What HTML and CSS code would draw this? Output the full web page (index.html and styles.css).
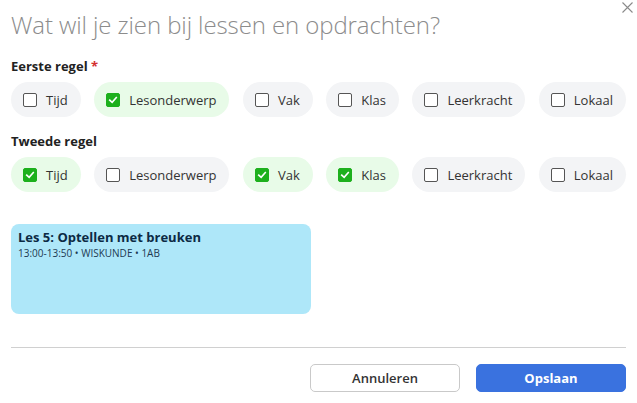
FILE: index.html
```html
<!DOCTYPE html>
<html lang="nl">
<head>
<meta charset="utf-8">
<link rel="stylesheet" href="styles.css">
</head>
<body>
<div class="dialog">
  <button class="close" aria-label="Sluiten">
    <svg width="11" height="11" viewBox="0 0 11 11"><path d="M0.5 0.5L10.5 10.5M10.5 0.5L0.5 10.5" stroke="#8a8a8a" stroke-width="1.1" fill="none"/></svg>
  </button>
  <h1 class="title">Wat wil je zien bij lessen en opdrachten?</h1>

  <div class="section">
    <div class="label">Eerste regel <span class="req">*</span></div>
    <div class="chips">
      <label class="chip"><span class="box"></span>Tijd</label>
      <label class="chip on"><span class="box"><svg viewBox="0 0 14 14"><path d="M3.2 7.2L6 9.8L10.8 4.3" stroke="#fff" stroke-width="1.9" fill="none" stroke-linecap="square"/></svg></span>Lesonderwerp</label>
      <label class="chip"><span class="box"></span>Vak</label>
      <label class="chip"><span class="box"></span>Klas</label>
      <label class="chip"><span class="box"></span>Leerkracht</label>
      <label class="chip"><span class="box"></span>Lokaal</label>
    </div>
  </div>

  <div class="section">
    <div class="label">Tweede regel</div>
    <div class="chips">
      <label class="chip on"><span class="box"><svg viewBox="0 0 14 14"><path d="M3.2 7.2L6 9.8L10.8 4.3" stroke="#fff" stroke-width="1.9" fill="none" stroke-linecap="square"/></svg></span>Tijd</label>
      <label class="chip"><span class="box"></span>Lesonderwerp</label>
      <label class="chip on"><span class="box"><svg viewBox="0 0 14 14"><path d="M3.2 7.2L6 9.8L10.8 4.3" stroke="#fff" stroke-width="1.9" fill="none" stroke-linecap="square"/></svg></span>Vak</label>
      <label class="chip on"><span class="box"><svg viewBox="0 0 14 14"><path d="M3.2 7.2L6 9.8L10.8 4.3" stroke="#fff" stroke-width="1.9" fill="none" stroke-linecap="square"/></svg></span>Klas</label>
      <label class="chip"><span class="box"></span>Leerkracht</label>
      <label class="chip"><span class="box"></span>Lokaal</label>
    </div>
  </div>

  <div class="preview">
    <div class="preview-title">Les 5: Optellen met breuken</div>
    <div class="preview-sub">13:00-13:50 • WISKUNDE • 1AB</div>
  </div>

  <div class="divider"></div>

  <div class="actions">
    <button class="btn secondary">Annuleren</button>
    <button class="btn primary">Opslaan</button>
  </div>
</div>
</body>
</html>
```
FILE: styles.css
```css
* { box-sizing: border-box; }
html, body { margin: 0; padding: 0; background: #fff; }
body { font-family: "Open Sans", "Noto Sans", sans-serif; color: #222; }

.dialog {
  position: relative;
  padding: 0 11px;
  width: 637px;
}

.close {
  position: absolute;
  top: 2px;
  right: 4px;
  border: 0;
  background: none;
  padding: 0;
  width: 11px;
  height: 11px;
  line-height: 0;
}

.title {
  margin: 0;
  padding-top: 8px;
  font-size: 24px;
  font-weight: 300;
  line-height: 34px;
  color: #8c8c8c;
  letter-spacing: -0.1px;
}

.section { margin-top: 15px; }
.section + .section { margin-top: 15px; }

.label {
  font-size: 13px;
  font-weight: 700;
  line-height: 18px;
  color: #222;
  margin-bottom: 7px;
}
.req { color: #d32f2f; }

.chips {
  display: flex;
  justify-content: space-between;
}

.chip {
  display: flex;
  align-items: center;
  gap: 9px;
  height: 35px;
  padding: 0 13px 0 12px;
  border-radius: 18px;
  background: #f3f4f6;
  font-size: 13px;
  color: #333;
}
.chip.on { background: #e8fbe8; }

.box {
  width: 14px;
  height: 14px;
  border: 1px solid #555;
  border-radius: 2px;
  background: #fff;
  display: block;
  flex: none;
}
.chip.on .box {
  border-color: #1db01d;
  background: #1db01d;
}
.box svg { display: block; width: 12px; height: 12px; }

.preview {
  margin-top: 32px;
  width: 300px;
  height: 90px;
  background: #aee7f9;
  border-radius: 8px;
  padding: 4px 7px;
}
.preview-title {
  font-size: 13px;
  font-weight: 700;
  color: #0c2a44;
  line-height: 18px;
}
.preview-sub {
  font-size: 10px;
  color: #1d3a52;
  line-height: 14px;
}

.divider {
  margin-top: 33px;
  border-top: 1px solid #d0d0d0;
}

.actions {
  display: flex;
  justify-content: flex-end;
  gap: 16px;
  margin-top: 16px;
}
.btn {
  width: 150px;
  height: 28px;
  border-radius: 5px;
  font-family: "Open Sans", "Noto Sans", sans-serif;
  font-size: 13px;
  font-weight: 600;
}
.btn.secondary {
  background: #fff;
  border: 1px solid #c9c9c9;
  color: #333;
}
.btn.primary {
  background: #3a72df;
  border: 1px solid #3a72df;
  color: #fff;
  font-weight: 700;
}
```
